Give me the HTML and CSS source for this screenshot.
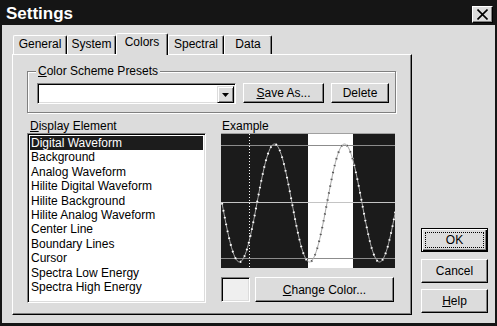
FILE: index.html
```html
<!DOCTYPE html>
<html>
<head>
<meta charset="utf-8">
<title>Settings</title>
<link rel="stylesheet" href="styles.css">
</head>
<body>
<div class="window">
  <div class="titlebar">
    <span class="title">Settings</span>
    <button class="close" aria-label="Close"><svg width="11" height="11" viewBox="0 0 11 11"><path d="M0.5,0.5 L10.5,10.5 M10.5,0.5 L0.5,10.5" stroke="#000" stroke-width="1.6" fill="none"/></svg></button>
  </div>
  <div class="frame">
    <div class="tabarea">
      <div class="tabstrip">
        <div class="tab w-general">General</div>
        <div class="tab w-system">System</div>
        <div class="tab sel w-colors">Colors</div>
        <div class="tab w-spectral">Spectral</div>
        <div class="tab w-data">Data</div>
      </div>
      <div class="panel">
        <div class="group">
          <span class="legend"><u>C</u>olor Scheme Presets</span>
          <div class="combo">
            <div class="combo-btn"><svg width="7" height="4" viewBox="0 0 7 4"><polygon points="0,0 7,0 3.5,4" fill="#000"/></svg></div>
          </div>
          <button class="btn save"><u>S</u>ave As...</button>
          <button class="btn delete">Delete</button>
        </div>
        <div class="cols">
          <div class="col-left">
            <div class="label pad-left"><u>D</u>isplay Element</div>
            <ul class="list">
              <li class="sel">Digital Waveform</li>
              <li>Background</li>
              <li>Analog Waveform</li>
              <li>Hilite Digital Waveform</li>
              <li>Hilite Background</li>
              <li>Hilite Analog Waveform</li>
              <li>Center Line</li>
              <li>Boundary Lines</li>
              <li>Cursor</li>
              <li>Spectra Low Energy</li>
              <li>Spectra High Energy</li>
            </ul>
          </div>
          <div class="col-right">
            <div class="label">Example</div>
            <svg class="example" width="174" height="135" viewBox="0 0 174 135">
              <defs>
                <path id="wave" d="M1,70 c5.707,30.22 11.167,59 17.5,59 c6.333,0 11.793,-28.78 17.5,-59 c5.707,-30.22 11.167,-59 17.5,-59 c6.333,0 11.793,28.78 17.5,59 c5.707,30.22 11.167,59 17.5,59 c6.333,0 11.793,-28.78 17.5,-59 c5.707,-30.22 11.167,-59 17.5,-59 c6.333,0 11.793,28.78 17.5,59 c5.707,30.22 11.167,59 17.5,59 c6.333,0 11.793,-28.78 17.5,-59" fill="none"/>
                <clipPath id="hl"><rect x="87" y="0" width="45" height="135"/></clipPath>
              </defs>
              <rect width="174" height="135" fill="#1b1b1b"/>
              <rect x="87" y="1" width="45" height="134" fill="#ffffff"/>
              <line x1="0" y1="0.5" x2="174" y2="0.5" stroke="#a0a0a0"/>
              <line x1="0" y1="12.5" x2="174" y2="12.5" stroke="#8c8c8c"/>
              <line x1="0" y1="69.5" x2="174" y2="69.5" stroke="#c4c4c4"/>
              <line x1="0" y1="125.5" x2="174" y2="125.5" stroke="#8c8c8c"/>
              <line x1="28.5" y1="1" x2="28.5" y2="135" stroke="#ffffff" stroke-dasharray="1 2"/>
              <use href="#wave" stroke="#a8a8a8" stroke-width="1"/>
              <use href="#wave" stroke="#ffffff" stroke-width="2" stroke-dasharray="1.5 5.5"/>
              <use href="#wave" stroke="#555555" stroke-width="2" stroke-dasharray="1.5 5.5" clip-path="url(#hl)"/>
            </svg>
            <div class="color-row">
              <div class="swatch"></div>
              <button class="btn change"><u>C</u>hange Color...</button>
            </div>
          </div>
        </div>
      </div>
    </div>
    <div class="side">
      <button class="btn ok"><span class="focus">OK</span></button>
      <button class="btn side-btn cancel">Cancel</button>
      <button class="btn side-btn help"><u>H</u>elp</button>
    </div>
  </div>
</div>
</body>
</html>
```
FILE: styles.css
```css
* {
  box-sizing: border-box;
  margin: 0;
  padding: 0;
}

body {
  margin: 0;
  background: #dcdcdc;
  font-family: "Liberation Sans", Arial, sans-serif;
  font-size: 12px;
  color: #000;
}

.window {
  width: 497px;
  height: 326px;
  display: flex;
  flex-direction: column;
  background: #dcdcdc;
}

.titlebar {
  flex: none;
  height: 25px;
  background: #151515;
  display: flex;
  justify-content: space-between;
  align-items: flex-start;
}

.title {
  color: #fff;
  font-weight: bold;
  font-size: 17px;
  line-height: 20px;
  margin: 4px 0 0 6px;
}

.close {
  width: 21px;
  height: 17px;
  margin: 6px 4px 0 0;
  background: #dcdcdc;
  border: 1px solid;
  border-color: #fff #000 #000 #fff;
  box-shadow: inset -1px -1px 0 #808080;
  display: flex;
  align-items: center;
  justify-content: center;
}

.frame {
  flex: 1;
  display: flex;
  border: 2px solid #151515;
  border-top: 0;
  border-bottom-width: 3px;
  padding: 8px 0 0 10px;
}

.tabarea {
  width: 400px;
  display: flex;
  flex-direction: column;
  align-self: flex-start;
}

.tabstrip {
  height: 21px;
  display: flex;
  align-items: flex-end;
  padding-left: 1px;
}

.tab {
  height: 19px;
  border-top: 1px solid #fff;
  border-left: 1px solid #fff;
  border-right: 1px solid #000;
  box-shadow: inset -1px 0 0 #808080;
  border-radius: 2px 2px 0 0;
  text-align: center;
  line-height: 16px;
  white-space: nowrap;
  background: #dcdcdc;
}

.tab.sel {
  height: 22px;
  margin-bottom: -1px;
  position: relative;
  z-index: 1;
  line-height: 16px;
}

.w-general { width: 54px; }
.w-system { width: 49px; }
.w-colors { width: 52px; }
.w-spectral { width: 56px; }
.w-data { width: 48px; }

.panel {
  height: 261px;
  border: 1px solid;
  border-color: #fff #000 #000 #fff;
  box-shadow: inset -1px -1px 0 #808080;
  padding: 16px 15px 0 14px;
}

.group {
  position: relative;
  height: 42px;
  border: 1px solid #808080;
  box-shadow: 1px 1px 0 #fff, inset 1px 1px 0 #fff;
  display: flex;
  align-items: flex-start;
  gap: 7px;
  padding: 11px 0 0 9px;
}

.legend {
  position: absolute;
  top: -8px;
  left: 8px;
  padding: 0 2px;
  line-height: 14px;
  background: #dcdcdc;
  white-space: nowrap;
}

.combo {
  width: 199px;
  height: 21px;
  border: 1px solid;
  border-color: #808080 #fff #fff #808080;
  box-shadow: inset 1px 1px 0 #000, inset -1px -1px 0 #dcdcdc;
  background: #fff;
  display: flex;
  justify-content: flex-end;
  padding: 1px;
}

.combo-btn {
  width: 17px;
  height: 17px;
  margin-top: 1px;
  background: #dcdcdc;
  border: 1px solid;
  border-color: #dcdcdc #000 #000 #dcdcdc;
  box-shadow: inset 1px 1px 0 #fff, inset -1px -1px 0 #808080;
  display: flex;
  align-items: center;
  justify-content: center;
}

.btn {
  background: #dcdcdc;
  border: 1px solid;
  border-color: #fff #000 #000 #fff;
  box-shadow: inset -1px -1px 0 #808080;
  font: inherit;
  color: #000;
  text-align: center;
  white-space: nowrap;
}

.save {
  width: 81px;
  height: 20px;
}

.delete {
  width: 58px;
  height: 20px;
}

.cols {
  display: flex;
  gap: 15px;
  margin-top: 7px;
}

.col-left {
  width: 179px;
}

.col-right {
  width: 174px;
}

.label {
  height: 13px;
  line-height: 13px;
  padding-left: 1px;
  white-space: nowrap;
}

.label.pad-left {
  padding-left: 3px;
}

.list {
  list-style: none;
  width: 179px;
  height: 170px;
  border: 1px solid;
  border-color: #808080 #fff #fff #808080;
  box-shadow: inset 1px 1px 0 #000, inset -1px -1px 0 #dcdcdc;
  background: #fff;
  padding: 2px 2px 2px 2px;
  overflow: hidden;
}

.list li {
  height: 14.4px;
  line-height: 14.4px;
  padding-left: 1px;
  white-space: nowrap;
}

.list li.sel {
  background: #1c1c1c;
  color: #fff;
}

.example {
  display: block;
}

.color-row {
  display: flex;
  gap: 5px;
  margin-top: 9px;
}

.swatch {
  width: 29px;
  height: 25px;
  border: 1px solid;
  border-color: #808080 #fff #fff #808080;
  box-shadow: inset 1px 1px 0 #000, inset -1px -1px 0 #dcdcdc;
  background: #efefef;
}

.change {
  width: 139px;
  height: 25px;
}

.side {
  width: 67px;
  margin-left: 9px;
  display: flex;
  flex-direction: column;
  justify-content: flex-end;
  padding-bottom: 10px;
}

.ok {
  height: 24px;
  padding: 3px;
  border: 1px solid #000;
  box-shadow: inset 1px 1px 0 #fff, inset -1px -1px 0 #000, inset -2px -2px 0 #808080;
}

.focus {
  display: block;
  height: 100%;
  border: 1px dotted #000;
  line-height: 14px;
}

.side-btn {
  height: 24px;
}

.cancel {
  margin-top: 7px;
}

.help {
  margin-top: 6px;
}
```
